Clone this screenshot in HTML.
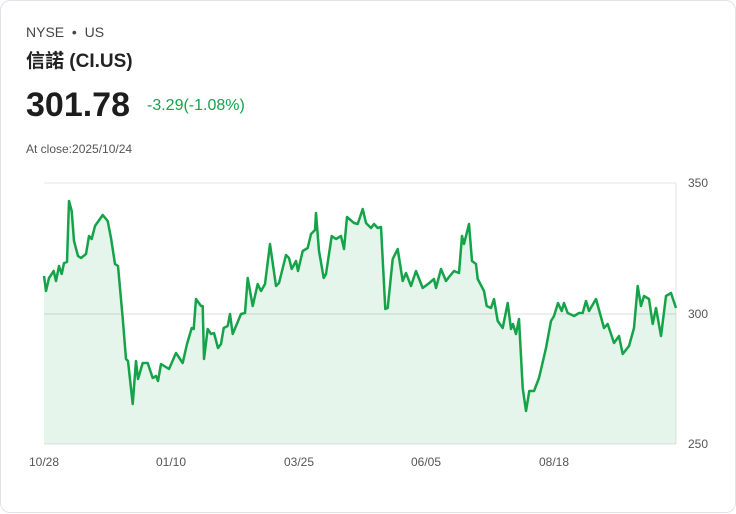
<!DOCTYPE html>
<html><head><meta charset="utf-8"><style>
html,body{margin:0;padding:0;background:#fff;}
.card{position:absolute;left:0;top:0;width:734px;height:511px;border:1px solid #dfe3e8;border-radius:10px;background:#fff;font-family:"Liberation Sans","Noto Sans CJK TC",sans-serif;}
.t{position:absolute;white-space:nowrap;}
</style></head><body>
<div class="card">
<div class="t" style="left:25px;top:23px;font-size:14px;color:#444;">NYSE &nbsp;•&nbsp; US</div>
<div class="t" style="left:25px;top:45px;font-size:19px;font-weight:bold;color:#222;">信諾 (CI.US)</div>
<div class="t" style="left:25px;top:85px;font-size:34px;font-weight:bold;color:#1d1d1d;">301.78</div>
<div class="t" style="left:146px;top:96px;font-size:16px;color:#16a34a;">-3.29(-1.08%)</div>
<div class="t" style="left:25px;top:141px;font-size:12px;color:#555;">At close:2025/10/24</div>
<svg style="position:absolute;left:0;top:0" width="736" height="513">
<line x1="43" y1="182" x2="675" y2="182" stroke="#e5e5e5"/>
<line x1="43" y1="313" x2="675" y2="313" stroke="#dcdcdc"/>
<line x1="43" y1="443" x2="675" y2="443" stroke="#e5e5e5"/>
<line x1="675" y1="182" x2="675" y2="443" stroke="#e5e5e5"/>
<path id="p" d="M43,275 L45,290 48,277 52.7,270 55,280 58,265 60.7,273 63,262 66,261 68,200 70.7,210 73,240 77,255 80,257 85,253 88,235 90.7,238 94,225 101.7,214 106.7,220 110,237 114,263 117,265 121.7,317 125,358 127,360 131.7,403 135,360 137,378 141.7,362 146.7,362 151.7,377 155,375 157,380 160,363 168,368 175,352 181.7,362 186,343 190.7,327 192.7,328 195,298 200,305 201.7,305 203,358 206.7,328 210,333 213,332 217,347 220,343 222.7,327 226.7,325 229,313 231.7,333 240,313 244,312 246.7,277 251.7,305 256.7,283 260,290 264,283 269,243 275,285 278,282 285,254 288,257 290.7,268 295,260 297,270 301.7,250 306.7,247 310,233 314,229 315,212 318,250 322.7,277 325,273 330.7,235 335,238 340,235 343,248 346,216 353,222 356.7,223 361.7,208 365,222 370,227 373,223 376.7,227 380,226 384.3,308 386.7,307 391.7,258 396.7,248 401.7,280 405,272 410,285 415,270 421.7,287 428.3,282 433,278 435,287 440,268 445,280 448,276 453,270 458,272 461,235 463,243 468,223 471,260 475,263 476.7,278 483,290 485.7,305 490,307 493,298 496.7,320 501.7,327 506.7,302 510,328 512,323 515,333 518,318 521.7,387 525,410 528.3,390 533,390 538,377 545,347 550,320 553,315 557,302 560.7,310 563,302 566.7,312 573,315 578,312 581.7,312 585,300 588,310 595,298 603,327 606.7,323 613,342 618,335 621.7,353 628,345 633,327 636.7,285 640,305 643,295 648,298 651.7,323 655,307 660,335 665,295 670,292 675,307" fill="none" stroke="#16a34a" stroke-width="2.5" stroke-linejoin="round"/>
<path d="M43,275 L45,290 48,277 52.7,270 55,280 58,265 60.7,273 63,262 66,261 68,200 70.7,210 73,240 77,255 80,257 85,253 88,235 90.7,238 94,225 101.7,214 106.7,220 110,237 114,263 117,265 121.7,317 125,358 127,360 131.7,403 135,360 137,378 141.7,362 146.7,362 151.7,377 155,375 157,380 160,363 168,368 175,352 181.7,362 186,343 190.7,327 192.7,328 195,298 200,305 201.7,305 203,358 206.7,328 210,333 213,332 217,347 220,343 222.7,327 226.7,325 229,313 231.7,333 240,313 244,312 246.7,277 251.7,305 256.7,283 260,290 264,283 269,243 275,285 278,282 285,254 288,257 290.7,268 295,260 297,270 301.7,250 306.7,247 310,233 314,229 315,212 318,250 322.7,277 325,273 330.7,235 335,238 340,235 343,248 346,216 353,222 356.7,223 361.7,208 365,222 370,227 373,223 376.7,227 380,226 384.3,308 386.7,307 391.7,258 396.7,248 401.7,280 405,272 410,285 415,270 421.7,287 428.3,282 433,278 435,287 440,268 445,280 448,276 453,270 458,272 461,235 463,243 468,223 471,260 475,263 476.7,278 483,290 485.7,305 490,307 493,298 496.7,320 501.7,327 506.7,302 510,328 512,323 515,333 518,318 521.7,387 525,410 528.3,390 533,390 538,377 545,347 550,320 553,315 557,302 560.7,310 563,302 566.7,312 573,315 578,312 581.7,312 585,300 588,310 595,298 603,327 606.7,323 613,342 618,335 621.7,353 628,345 633,327 636.7,285 640,305 643,295 648,298 651.7,323 655,307 660,335 665,295 670,292 675,307 L675,443 L43,443 Z" fill="#16a34a" fill-opacity="0.11" stroke="none"/>
<g font-family="Liberation Sans,sans-serif" font-size="12" fill="#555">
<text x="687" y="186">350</text><text x="687" y="317">300</text><text x="687" y="447">250</text>
<text x="43" y="465" text-anchor="middle">10/28</text>
<text x="170" y="465" text-anchor="middle">01/10</text>
<text x="298" y="465" text-anchor="middle">03/25</text>
<text x="425" y="465" text-anchor="middle">06/05</text>
<text x="553" y="465" text-anchor="middle">08/18</text>
</g>
</svg>
</div>
</body></html>
